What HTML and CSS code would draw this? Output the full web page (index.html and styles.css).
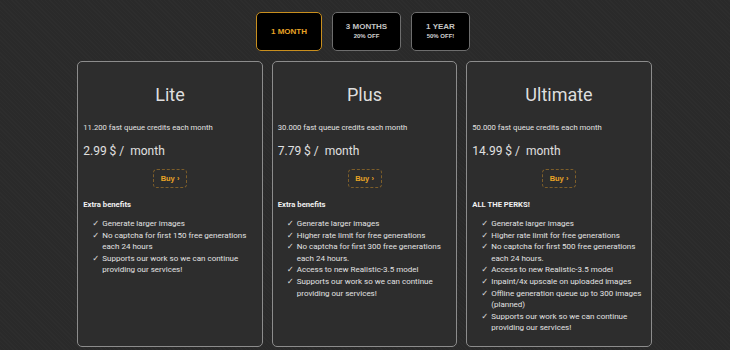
FILE: index.html
```html
<!DOCTYPE html>
<html>
<head>
<meta charset="utf-8">
<link rel="stylesheet" href="styles.css">
</head>
<body>
<div class="page">
  <div class="periods">
    <button class="period active"><span class="p-main">1 MONTH</span></button>
    <button class="period three"><span class="p-main">3 MONTHS</span><span class="p-sub">20% OFF</span></button>
    <button class="period year"><span class="p-main">1 YEAR</span><span class="p-sub">50% OFF!</span></button>
  </div>
  <div class="cards">
    <div class="card">
      <h2 class="title">Lite</h2>
      <p class="credits">11.200 fast queue credits each month</p>
      <p class="price">2.99 $ / &nbsp;month</p>
      <div class="buy-row"><button class="buy">Buy ›</button></div>
      <p class="perks-title">Extra benefits</p>
      <ul class="perks">
        <li>Generate larger images</li>
        <li>No captcha for first 150 free generations each 24 hours</li>
        <li>Supports our work so we can continue providing our services!</li>
      </ul>
    </div>
    <div class="card">
      <h2 class="title">Plus</h2>
      <p class="credits">30.000 fast queue credits each month</p>
      <p class="price">7.79 $ / &nbsp;month</p>
      <div class="buy-row"><button class="buy">Buy ›</button></div>
      <p class="perks-title">Extra benefits</p>
      <ul class="perks">
        <li>Generate larger images</li>
        <li>Higher rate limit for free generations</li>
        <li>No captcha for first 300 free generations each 24 hours.</li>
        <li>Access to new Realistic-3.5 model</li>
        <li>Supports our work so we can continue providing our services!</li>
      </ul>
    </div>
    <div class="card">
      <h2 class="title">Ultimate</h2>
      <p class="credits">50.000 fast queue credits each month</p>
      <p class="price">14.99 $ / &nbsp;month</p>
      <div class="buy-row"><button class="buy">Buy ›</button></div>
      <p class="perks-title">ALL THE PERKS!</p>
      <ul class="perks">
        <li>Generate larger images</li>
        <li>Higher rate limit for free generations</li>
        <li>No captcha for first 500 free generations each 24 hours.</li>
        <li>Access to new Realistic-3.5 model</li>
        <li>Inpaint/4x upscale on uploaded images</li>
        <li>Offline generation queue up to 300 images (planned)</li>
        <li>Supports our work so we can continue providing our services!</li>
      </ul>
    </div>
  </div>
</div>
</body>
</html>
```
FILE: styles.css
```css
* { box-sizing: border-box; }
html, body { margin: 0; padding: 0; }
body {
  background-color: #2a2a2a;
  background-image: repeating-linear-gradient(45deg, rgba(255,255,255,0.015) 0 1px, transparent 1px 3px);
  font-family: Roboto, "Liberation Sans", sans-serif;
  color: #e0e0e0;
  width: 730px;
  height: 350px;
  overflow: hidden;
}
.page {
  display: flex;
  flex-direction: column;
  align-items: center;
  padding-top: 12px;
}
.periods {
  display: flex;
  gap: 10px;
  margin-right: 4px;
}
.period {
  background: #000;
  border: 1px solid #6e6e6e;
  border-radius: 5px;
  height: 39px;
  padding: 0;
  display: flex;
  flex-direction: column;
  align-items: center;
  justify-content: center;
  font-family: "Liberation Sans", Arial, sans-serif;
  font-weight: bold;
  color: #c4c4c4;
}
.period.active {
  border-color: #c98f1e;
  color: #e9a425;
  width: 66px;
}
.period.three { width: 69px; }
.period.year { width: 59px; }
.p-main { font-size: 8px; line-height: 10px; }
.p-sub { font-size: 6px; line-height: 9px; color: #d4d4d4; }
.cards {
  display: flex;
  gap: 9px;
  margin-top: 10px;
  margin-right: 1px;
}
.card {
  width: 185.5px;
  height: 286px;
  border: 1.5px solid #8c8c8c;
  border-radius: 5px;
  background: #2d2d2d;
  padding: 0 5px;
}
.title {
  margin: 22px 0 0;
  font-size: 18px;
  line-height: 21px;
  font-weight: 400;
  text-align: center;
  color: #dedede;
}
.credits {
  margin: 17px 0 0;
  font-size: 7.7px;
  line-height: 11px;
  color: #e2e2e2;
}
.price {
  margin: 10px 0 0;
  font-size: 12px;
  line-height: 16px;
  color: #e0e0e0;
}
.buy-row {
  display: flex;
  justify-content: center;
  margin-top: 10px;
}
.buy {
  width: 34px;
  height: 19px;
  padding: 0;
  background: transparent;
  border: 1px dashed #7d5e2a;
  border-radius: 4px;
  color: #e9a425;
  font-family: "Liberation Sans", Arial, sans-serif;
  font-weight: bold;
  font-size: 7.5px;
}
.perks-title {
  margin: 11px 0 0;
  font-size: 7.7px;
  line-height: 11px;
  font-weight: bold;
  color: #f0f0f0;
}
.perks {
  list-style: none;
  margin: 8px 0 0;
  padding: 0 0 0 13px;
  font-size: 8px;
  line-height: 11.6px;
  color: #e2e2e2;
}
.perks li {
  position: relative;
  padding-left: 6px;
}
.perks li::before {
  content: "✓";
  position: absolute;
  left: -4px;
  top: 0;
  font-family: "DejaVu Sans", sans-serif;
  font-size: 8.5px;
  color: #d8d8d8;
}
```
